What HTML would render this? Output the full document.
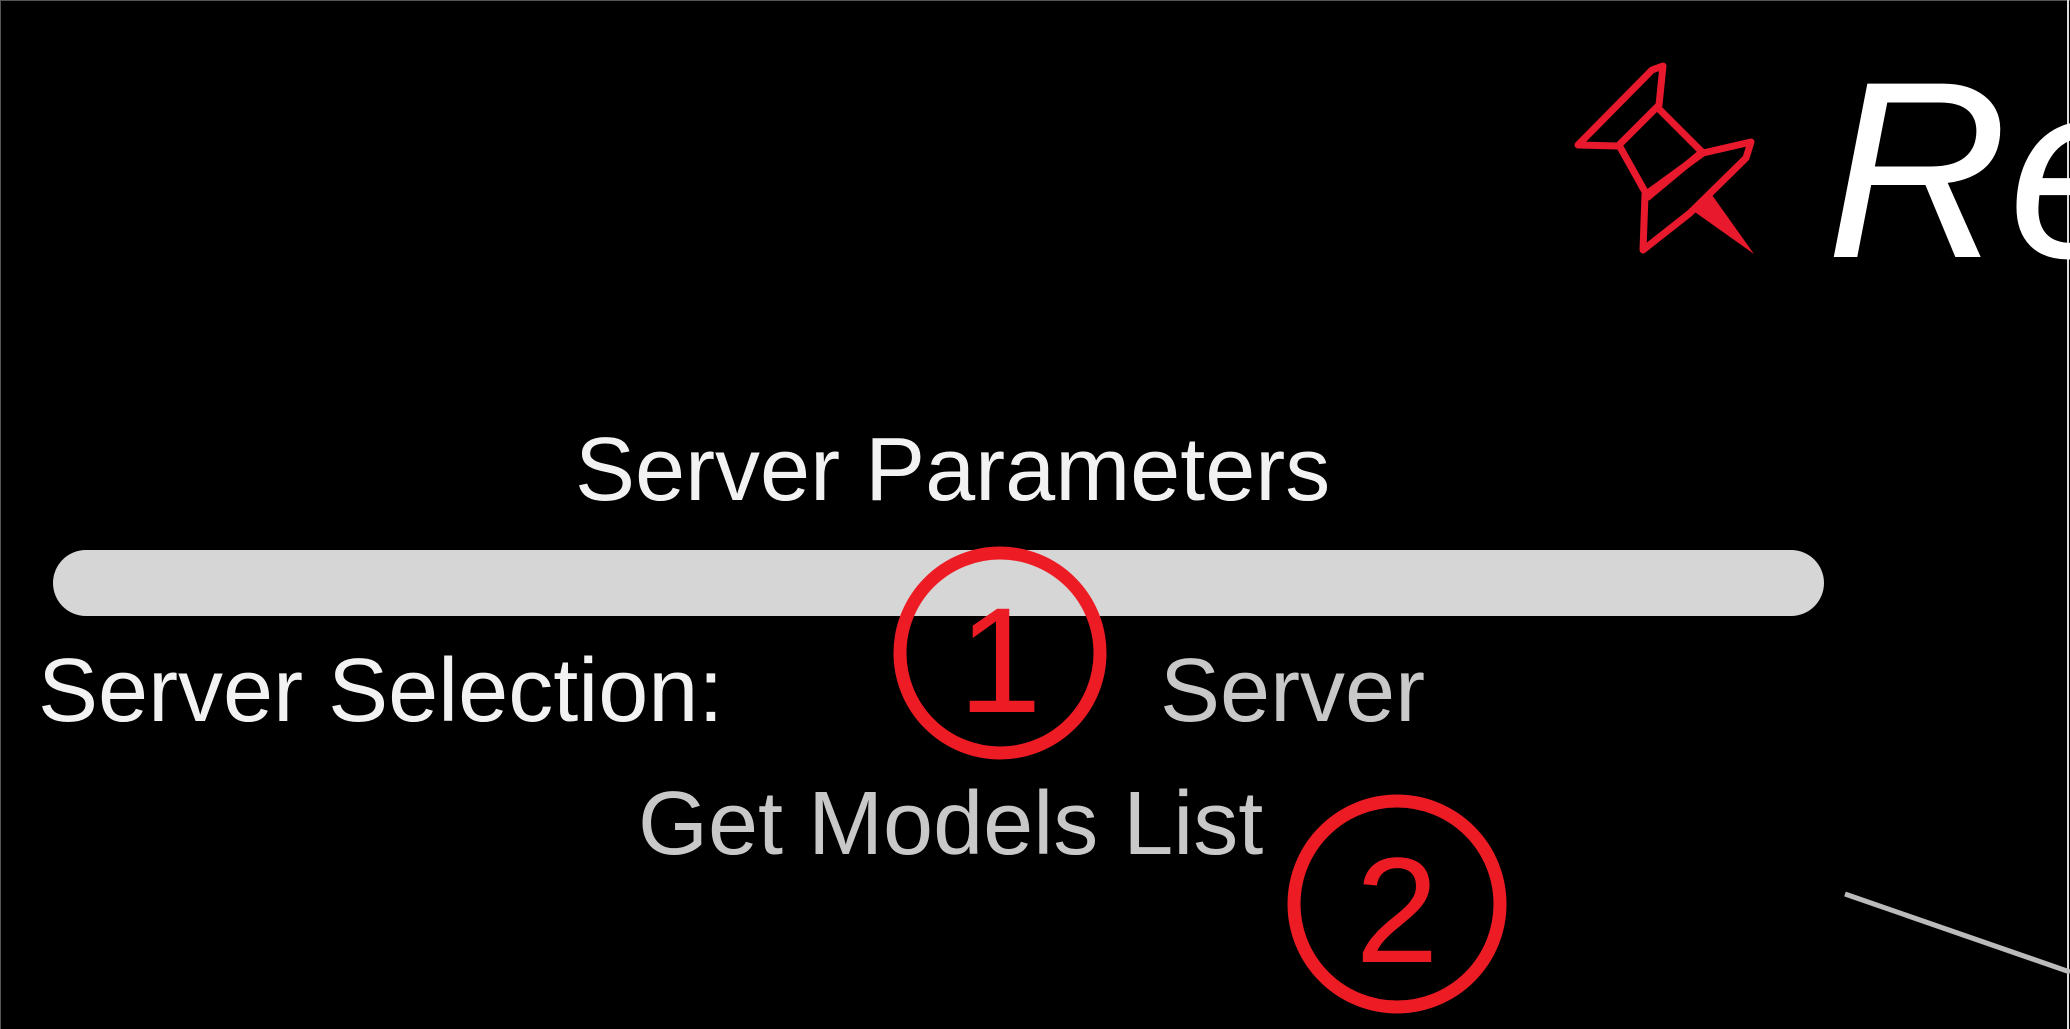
<!DOCTYPE html>
<html><head><meta charset="utf-8"><style>
html,body{margin:0;padding:0;background:#000;}
body{width:2070px;height:1029px;position:relative;overflow:hidden;font-family:"Liberation Sans",Arial,sans-serif;}
.t{position:absolute;white-space:nowrap;line-height:1;}
</style></head><body>
<div style="position:absolute;left:0;top:0;width:2070px;height:1px;background:#555"></div>
<div style="position:absolute;left:0;top:0;width:1px;height:1029px;background:#555"></div>
<div style="position:absolute;left:2067px;top:0;width:2px;height:1029px;background:#ddd"></div>

<div class="t" style="left:575px;top:425px;font-size:90px;color:#f2f2f2;">Server Parameters</div>
<div style="position:absolute;left:53px;top:550px;width:1771px;height:66px;background:#d6d6d6;border-radius:33px;"></div>
<div class="t" style="left:38px;top:646px;font-size:90px;color:#f2f2f2;">Server Selection:</div>
<div class="t" style="left:1160px;top:646px;font-size:90px;color:#c8c8c8;">Server</div>
<div class="t" style="left:638px;top:779px;font-size:90px;color:#c8c8c8;">Get Models List</div>
<div class="t" style="left:1826px;top:45px;font-size:252px;color:#fff;font-style:italic;">Re</div>

<svg width="2070" height="1029" style="position:absolute;left:0;top:0">
  <line x1="1845" y1="894" x2="2070" y2="972" stroke="#bbb" stroke-width="5"/>
  <g fill="none" stroke="#e8192c" stroke-width="7" stroke-linejoin="round">
    <path d="M1578 145 L1652 70 L1663 66 L1659 105 L1618 146 Z"/>
    <path d="M1657 107 L1702 152 L1648 197 L1620 147"/>
    <path d="M1645 195 L1703 153 L1751 142 L1746 158 L1690 213 L1643 250 Z"/>
  </g>
  <path d="M1692 210 L1712 195 L1754 254 Z" fill="#e8192c"/>
  <g fill="none" stroke="#ed1c24" stroke-width="13">
    <circle cx="1000" cy="653" r="100"/>
    <circle cx="1397" cy="904" r="103"/>
  </g>
  <text x="1000" y="712" font-family="Liberation Sans, sans-serif" font-size="150" fill="#ed1c24" text-anchor="middle">1</text>
  <text x="1397" y="962" font-family="Liberation Sans, sans-serif" font-size="150" fill="#ed1c24" text-anchor="middle">2</text>
</svg>
</body></html>
